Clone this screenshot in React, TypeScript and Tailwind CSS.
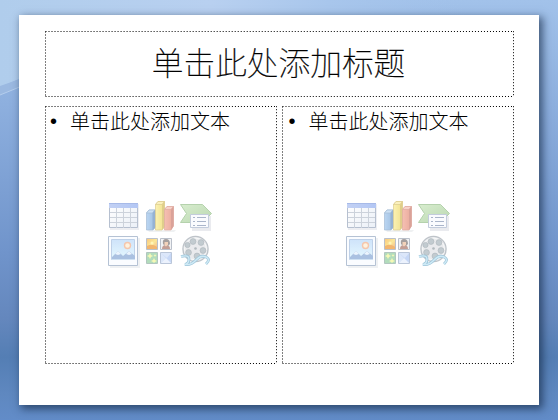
import type { ReactNode } from "react";

const cjk = "font-['Noto_Sans_CJK_SC','Liberation_Sans',sans-serif]";

function Backdrop() {
  return (
    <svg className="absolute inset-0 h-full w-full" viewBox="0 0 558 420" preserveAspectRatio="none" aria-hidden="true">
      <defs>
        <linearGradient id="sky" x1="0" x2="0" y1="0" y2="1">
          <stop offset="0" stopColor="#a2c2ea" />
          <stop offset=".25" stopColor="#8dafde" />
          <stop offset=".6" stopColor="#7094cb" />
          <stop offset=".76" stopColor="#6487bd" />
          <stop offset=".85" stopColor="#547eb4" />
          <stop offset=".94" stopColor="#5f88c0" />
          <stop offset="1" stopColor="#628cc8" />
        </linearGradient>
        <linearGradient id="glow" x1="0" x2="1" y1="0" y2="0">
          <stop offset="0" stopColor="#b0cdec" />
          <stop offset=".45" stopColor="#b8d0f0" />
          <stop offset=".7" stopColor="#a8c6ec" />
          <stop offset="1" stopColor="#a2c2ea" stopOpacity="0" />
        </linearGradient>
      </defs>
      <path d="M0 0h558v420H0z" fill="url(#sky)" />
      <path d="M0 0H470V16H22V78L0 87z" fill="url(#glow)" />
      <path d="M0 86Q12 82 22 78V86L0 95z" fill="#9bb9e1" />
      <path d="M0 95L22 86" stroke="#b4cdec" strokeWidth="1" />
    </svg>
  );
}

function DottedBox({ w, h, className, children }: { w: number; h: number; className: string; children: ReactNode }) {
  const drift = 0.5 / (w / 3);
  return (
    <div className={`relative ${className}`}>
      <svg className="absolute inset-0" width={w} height={h} fill="none" stroke="#000" aria-hidden="true">
        <path d={`M.5 .5H${w}`} strokeDasharray={`1 ${2 + drift}`} />
        <path d={`M.5 ${h - 0.5}H${w}`} strokeDasharray={`1 ${2 + drift}`} />
        <path d={`M.5 .5V${h}`} strokeDasharray="1 2" />
        <path d={`M${w - 0.5} .2V${h}`} strokeDasharray="1 2" />
      </svg>
      {children}
    </div>
  );
}

function InsertIcons({ className }: { className: string }) {
  return (
    <svg className={`absolute top-[94px] opacity-80 ${className}`} width="108" height="72" viewBox="0 0 108 72" aria-hidden="true">
      <defs>
        <linearGradient id="cells" x2="1" y2="1"><stop stopColor="#fff" /><stop offset="1" stopColor="#e7edf6" /></linearGradient>
        <linearGradient id="header"><stop stopColor="#b4c6f2" /><stop offset="1" stopColor="#a0b9f2" /></linearGradient>
        <linearGradient id="blue"><stop stopColor="#aaccef" /><stop offset="1" stopColor="#88afd9" /></linearGradient>
        <linearGradient id="yellow"><stop stopColor="#fbefa0" /><stop offset="1" stopColor="#edd972" /></linearGradient>
        <linearGradient id="red"><stop stopColor="#f4b0a0" /><stop offset="1" stopColor="#e49583" /></linearGradient>
        <linearGradient id="green" x2="1" y2="1"><stop stopColor="#cfe9c3" /><stop offset="1" stopColor="#aacf9f" /></linearGradient>
        <linearGradient id="photo" x2="0" y2="1"><stop stopColor="#c3ddfa" /><stop offset="1" stopColor="#e0f8ff" /></linearGradient>
        <linearGradient id="sunset" x2="1" y2="1"><stop stopColor="#f8b85d" /><stop offset=".5" stopColor="#fbe37d" /><stop offset="1" stopColor="#ee9d70" /></linearGradient>
      </defs>

      <g>
        <path d="M4 4h29v26H4z" fill="#e9ebef" />
        <path d="M3.5 3.5h28v24h-28z" fill="url(#cells)" stroke="#a5b1c5" />
        <path d="M3 3h29v5H3z" fill="url(#header)" />
        <path d="M3 3.5h29" stroke="#92aae3" />
        <path d="M10.5 8v20M17.5 8v20M24.5 8v20M4 12.5h27M4 17.5h27M4 22.5h27" stroke="#c0c7d3" />
      </g>

      <g strokeWidth=".7">
        <path d="M42 30h28l-2 2H43z" fill="#eceef0" stroke="none" />
        <path d="M40.5 13l2.500-3h6.500v17l-2.500 3h-6.500z" fill="url(#blue)" stroke="#8faccc" />
        <path d="M40.5 13l2.5-3h6l-2.500 3z" fill="#c1daf3" stroke="#8faccc" />
        <path d="M46.5 13l2.500-3v18l-2.500 2z" fill="#7ca0c9" stroke="none" />
        <path d="M49.500 4.500l2.500-3h6.500v25l-2.500 3.500h-6.500z" fill="url(#yellow)" stroke="#d3bf72" />
        <path d="M49.500 4.500l2.500-3h6.500l-2.500 3z" fill="#f9edae" stroke="#d3bf72" />
        <path d="M56 4.500l2.500-3v26l-2.500 2.500z" fill="#d8c26f" stroke="none" />
        <path d="M58.500 9.500l2.500-3h6.500v19l-2.500 4.500h-6.500z" fill="url(#red)" stroke="#d9988c" />
        <path d="M58.500 9.500l2.500-3h6.500l-2.500 3z" fill="#f6c7bd" stroke="#d9988c" />
        <path d="M65 9.500l2.500-3v20l-2.500 3.500z" fill="#d28c80" stroke="none" />
      </g>

      <g>
        <path d="M74.500 4.500h22l9 9-9 9h-22l6-9z" fill="url(#green)" stroke="#a3c899" />
        <path d="M86 16h19v15H86z" fill="#e5e7ec" />
        <path d="M84.500 14.500h18v13h-18z" fill="#f9fbfe" stroke="#b5c0d4" />
        <path d="M87 17.500h2M87 21.500h2M87 25.500h2M91 17.500h9M91 21.500h9M91 25.500h9" stroke="#96a3be" />
      </g>

      <g>
        <path d="M4 38h30v30H4z" fill="#eceef1" />
        <path d="M2.500 36.500h29v29h-29z" fill="#fafcff" stroke="#a3b4ca" />
        <path d="M5.500 39.500h23v20h-23z" fill="url(#photo)" stroke="#b0c6e3" />
        <circle cx="21.500" cy="45.500" r="3" fill="#fff0d7" stroke="#f3b898" strokeWidth="1.400" />
        <path d="M6 57l6-6 5 5 6-5 6 5v4H6z" fill="#96b2da" />
        <path d="M9 54l3-3 3 3-3 1zM20 54l3-3 3 3-3 1z" fill="#e7f2fd" />
        <path d="M6 59.500h23" stroke="#c4daf0" />
      </g>

      <g strokeWidth="1">
        <path d="M40.500 38.500h11v11h-11z" fill="url(#sunset)" stroke="#aab1bd" />
        <path d="M41 46q5-3 10 1v2H41z" fill="#f0a44c" />
        <circle cx="46" cy="43" r="1.500" fill="#fff3a8" />
        <path d="M54.500 38.500h11v11h-11z" fill="#eef0f2" stroke="#aab1bd" />
        <path d="M56 49q0-4 4-4t4 4z" fill="#b5877b" />
        <path d="M57 44q-1-5 3-5t4 5l-2 2h-3z" fill="#8f8887" />
        <path d="M58.500 42h3.500v3l-2 1.500-1.500-1z" fill="#f1c7aa" />
        <path d="M40.500 52.500h11v11h-11z" fill="#a0d4ac" stroke="#a0b8b0" />
        <path d="M44 53l1 2 2 1-2 1-1 2-1-2-2-1 2-1zM48 58l1 2 2 1-2 1-1 1-1-1-2-1 2-1zM49 54l.5 1 1 .5-1 .5-.5 1-.5-1-1-.5 1-.5z" fill="#f5f8a5" />
        <path d="M54.500 52.500h11v11h-11z" fill="#d4e2fa" stroke="#a9b8d0" />
        <path d="M55 53l6 5 4-5v10H55l5-5z" fill="#b8cef4" />
        <path d="M55 63l5-5 5 5z" fill="#e8effd" />
      </g>

      <g>
        <circle cx="89.500" cy="49" r="12.600" fill="#e4e6e9" stroke="#aeb5bc" strokeWidth="1.300" />
        <circle cx="89.500" cy="49" r="10.900" fill="none" stroke="#f7f8f8" />
        <g fill="#b4bfc5" stroke="#9fa9b0" strokeWidth=".7">
          <circle cx="87" cy="41.500" r="2.900" /><circle cx="95" cy="42.500" r="2.900" />
          <circle cx="97" cy="50.500" r="2.900" /><circle cx="91" cy="56" r="2.900" />
          <circle cx="82.500" cy="52.500" r="2.900" /><circle cx="81.500" cy="45" r="2.600" />
        </g>
        <circle cx="89.500" cy="48.500" r="1.300" fill="#9fa8af" />
        <path d="M75 56.500q8-2 8 2.500t-4 5.500q6 1 11-4.500t10-3 0 7" fill="none" stroke="#86b7d0" strokeWidth="2.800" />
        <path d="M75 56.500q8-2 8 2.500t-4 5.500q6 1 11-4.500t10-3 0 7" fill="none" stroke="#c4e6f5" strokeWidth="1.400" />
      </g>
    </svg>
  );
}

function ContentPlaceholder({ textInset, iconInset }: { textInset: string; iconInset: string }) {
  return (
    <DottedBox w={232} h={258} className="h-[258px] w-[232px]">
      <div className={`flex items-center pt-px text-[20px] leading-[28px] text-black ${textInset} ${cjk}`}>
        <span className="w-[20px] font-['Liberation_Sans',sans-serif]">•</span>
        <span className="font-light whitespace-nowrap">单击此处添加文本</span>
      </div>
      <InsertIcons className={iconInset} />
    </DottedBox>
  );
}

export default function App() {
  return (
    <div className="relative h-[420px] w-[558px] overflow-hidden pt-[15px] pl-[19px]">
      <Backdrop />
      <main className="relative flex h-[390px] w-[520px] flex-col gap-[9px] bg-white px-[26px] pt-[16px] shadow-[3px_3px_8px_1px_rgba(18,38,68,0.65)]">
        <DottedBox w={469} h={66} className="h-[66px] w-[469px]">
          <h1 className={`pr-[2px] text-center text-[31.7px] leading-[61px] font-thin whitespace-nowrap text-black [-webkit-text-stroke:0.3px_#000] ${cjk}`}>单击此处添加标题</h1>
        </DottedBox>
        <div className="flex gap-[5px]">
          <ContentPlaceholder textInset="pl-[5px]" iconInset="left-[61px]" />
          <ContentPlaceholder textInset="pl-[7px]" iconInset="left-[62px]" />
        </div>
      </main>
    </div>
  );
}
